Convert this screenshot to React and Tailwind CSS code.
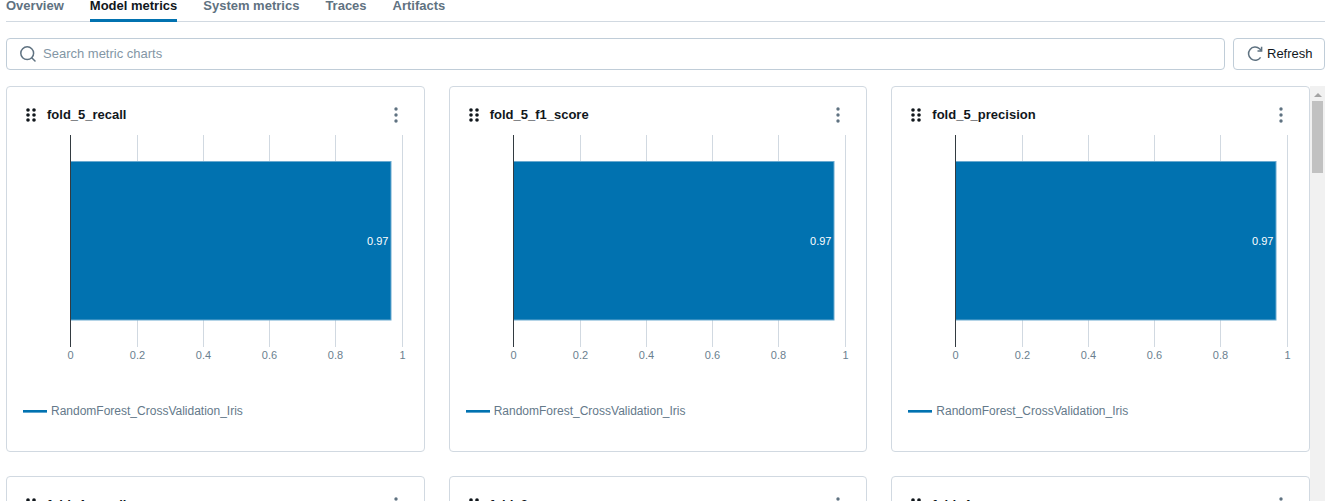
import React from "react";

const BAR = "#0172b0";
const ticks = [
  { x: 63.5, label: "0" },
  { x: 130.5, label: "0.2" },
  { x: 196.5, label: "0.4" },
  { x: 262.5, label: "0.6" },
  { x: 328.5, label: "0.8" },
  { x: 395.5, label: "1" },
];

function Grip() {
  return (
    <svg width="12" height="16" viewBox="0 0 12 16" className="shrink-0" fill="#11171c">
      {[3, 8, 13].map((y) => (
        <g key={y}>
          <circle cx="3" cy={y} r="1.8" />
          <circle cx="9" cy={y} r="1.8" />
        </g>
      ))}
    </svg>
  );
}

function Kebab() {
  return (
    <svg width="6" height="16" viewBox="0 0 6 16" fill="#5f7281">
      <circle cx="3" cy="2" r="1.7" />
      <circle cx="3" cy="8" r="1.7" />
      <circle cx="3" cy="14" r="1.7" />
    </svg>
  );
}

function Chart() {
  return (
    <svg width="417" height="236" viewBox="0 0 417 236" className="block shrink-0">
      {ticks.slice(1).map((t) => (
        <line key={t.x} x1={t.x} x2={t.x} y1="0" y2="212" stroke="#d1d9e1" strokeWidth="1" />
      ))}
      <rect x="63.5" y="26.5" width="320.5" height="158.5" fill={BAR} stroke="#6baad0" strokeWidth="1" />
      <line x1="63.5" x2="63.5" y1="0" y2="212" stroke="#333b41" strokeWidth="1" />
      <text x="381.5" y="110" textAnchor="end" fontSize="11" fill="#ffffff">0.97</text>
      {ticks.map((t) => (
        <text key={t.label} x={t.x} y="224" textAnchor="middle" fontSize="11" fill="#6b7f8f">
          {t.label}
        </text>
      ))}
    </svg>
  );
}

function Card({ title, full }) {
  return (
    <div className="h-[366px] rounded border border-[#d1d9e1] bg-white flex flex-col">
      <div className="h-[48px] shrink-0 flex items-center justify-between pl-[18px] pr-[25px] pt-[8px]">
        <div className="flex items-center gap-[10px]">
          <Grip />
          <span className="text-[13px] leading-5 font-bold text-[#11171c]">{title}</span>
        </div>
        <Kebab />
      </div>
      {full && (
        <>
          <Chart />
          <div className="flex items-center gap-[4px] pl-[16px] mt-[32px]">
            <div className="w-[24px] h-[3px] bg-[#0172b0] border-b border-[#5fa5cf]" />
            <span className="text-[12px] leading-4 text-[#64798a]">RandomForest_CrossValidation_Iris</span>
          </div>
        </>
      )}
    </div>
  );
}

function SearchIcon() {
  return (
    <svg width="16" height="16" viewBox="0 0 16 16" fill="none" stroke="#5f7281" strokeWidth="1.5" strokeLinecap="round">
      <circle cx="7.2" cy="7.2" r="6.4" />
      <path d="M12 12 L15 15" />
    </svg>
  );
}

function RefreshIcon() {
  return (
    <svg width="16" height="16" viewBox="0 0 16 16" fill="none" stroke="#5f7281" strokeWidth="1.5">
      <path d="M13.6 11.4 A6.6 6.6 0 1 1 12.6 2.8 L14.4 4.6" />
      <path d="M14.6 0.8 V4.9 H10.5" />
    </svg>
  );
}

const tabs = ["Overview", "Model metrics", "System metrics", "Traces", "Artifacts"];

export default function App() {
  return (
    <div className="h-[501px] overflow-hidden bg-white px-[6px] font-['Liberation_Sans',Arial,sans-serif]">
      <div className="flex gap-[26px] h-[22px] border-b border-[#d1d9e1] items-end">
        {tabs.map((t) => (
          <div
            key={t}
            className={
              t === "Model metrics"
                ? "h-[22px] border-b-[3px] border-[#0172b0] text-[13px] leading-[11px] font-bold text-[#11171c] -mb-px"
                : "h-[22px] text-[13px] leading-[11px] font-bold text-[#5f7281] -mb-px"
            }
          >
            {t}
          </div>
        ))}
      </div>

      <div className="flex gap-2 mt-[16px]">
        <div className="flex-1 h-[32px] rounded border border-[#c0cdd8] flex items-center gap-[7px] pl-[13px]">
          <SearchIcon />
          <span className="text-[13px] text-[#8396a5]">Search metric charts</span>
        </div>
        <div className="w-[92px] h-[32px] rounded border border-[#c0cdd8] flex items-center gap-[4px] pl-[13px]">
          <RefreshIcon />
          <span className="text-[13px] text-[#11171c]">Refresh</span>
        </div>
      </div>

      <div className="flex mt-[16px]">
        <div className="w-[1304px] grid grid-cols-3 gap-6">
          <Card title="fold_5_recall" full />
          <Card title="fold_5_f1_score" full />
          <Card title="fold_5_precision" full />
          <Card title="fold_4_recall" />
          <Card title="fold_3_accuracy" />
          <Card title="fold_4_accuracy" />
        </div>
        <div className="w-[15px] bg-[#f1f1f1] flex flex-col items-center pt-[7px]">
          <div className="w-0 h-0 border-x-[4px] border-x-transparent border-b-[4px] border-b-[#a3a3a3]" />
          <div className="w-[11px] h-[72px] bg-[#c1c1c1] mt-[4px]" />
        </div>
      </div>
    </div>
  );
}
